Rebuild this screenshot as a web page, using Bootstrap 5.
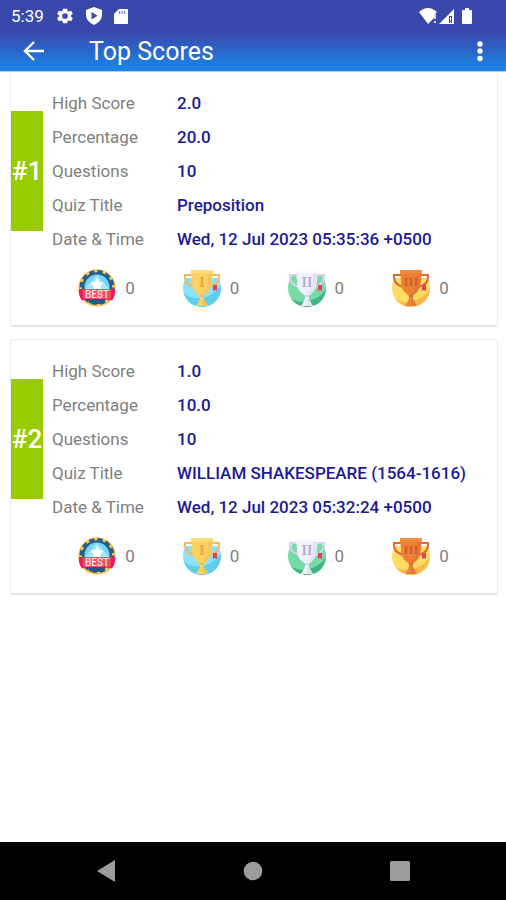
<!DOCTYPE html>
<html lang="en">
<head>
<meta charset="utf-8">
<meta name="viewport" content="width=device-width, initial-scale=1">
<title>Top Scores</title>
<link href="https://cdn.jsdelivr.net/npm/bootstrap@5.3.0/dist/css/bootstrap.min.css" rel="stylesheet">
<style>
body { font-family: Roboto, "Liberation Sans", sans-serif; background: #fff; }
svg { display: block; flex: none; }
.top-area { height: 72px; background: linear-gradient(#3949ab 32px, #1a86e8 70px); border-bottom: 1px solid #b3cdec; color: #fff; }
.status-line { height: 32px; padding: 0 33px 0 11px; gap: 12px; font-size: 17px; line-height: 32px; }
.app-bar { height: 39px; padding: 0 16px 0 22px; }
.app-bar h1 { font-size: 25px; line-height: 41px; margin: 0 0 0 43px; font-weight: 400; }
.plain-btn { border: 0; padding: 0; background: none; color: inherit; }
.score-list { padding: 0 8px 0 10px; gap: 12px; }
.score-card { border: 1px solid #ececec; border-bottom: 2px solid #e6e6e6; border-radius: 2px; }
.score-card:first-child { border-top: 0; }
.score-main { padding-top: 14px; }
.rank { width: 32px; height: 120px; background: #99cc00; color: #fff; font-size: 26px; font-weight: 500; }
.score-table { font-size: 17px; line-height: 34px; margin-left: 9px; }
.score-table th { font-weight: 400; color: #808080; width: 125px; padding: 0; }
.score-table td { font-weight: 500; color: #1a1a96; padding: 0; }
.medals { padding: 13px 0 18px 19px; }
.medal { gap: 9px; font-size: 17px; line-height: 39px; color: #808080; }
.medal svg { margin-bottom: 1px; }
.medals { padding-bottom: 17px; }
.system-nav { height: 58px; background: #000; color: #9c9c9c; padding: 0 33px; }
</style>
<script src="https://cdn.jsdelivr.net/npm/bootstrap@5.3.0/dist/js/bootstrap.bundle.min.js"></script>
</head>
<body class="d-flex flex-column min-vh-100">

<svg width="0" height="0" class="position-absolute" aria-hidden="true">
  <defs>
    <clipPath id="disc"><circle cx="19" cy="19" r="19"/></clipPath>
    <symbol id="best" viewBox="0 0 38 38">
      <circle cx="19" cy="19" r="18.800" fill="#fbc455"/>
      <circle cx="19" cy="18.500" r="15.500" fill="none" stroke="#245f8c" stroke-width="4" stroke-dasharray="5 3.115"/>
      <circle cx="19" cy="18.500" r="15.200" fill="#245f8c"/>
      <circle cx="19" cy="18" r="12.500" fill="#74d5f8"/>
      <path d="M7 20 19 6l12 14z" fill="#a9e6fb"/>
      <path d="m19 9 2 4.100 4.500.6-3.200 3.200.8 4.500-4.100-2.100-4.100 2.100.8-4.500-3.200-3.200 4.500-.6z" fill="#fff"/>
      <path d="M1 20h36q1 6-3 11.500L29 30H9l-5 1.500Q0 26 1 20z" fill="#ec1c58"/>
      <path d="M5 20h28v10H5z" fill="#f9485f"/>
      <path d="M11 30h16v4q-8 2-16 0z" fill="#245a85"/>
      <text x="19" y="28.500" text-anchor="middle" font-family="Roboto, sans-serif" font-size="10" font-weight="500" fill="#ffe4ea">BEST</text>
    </symbol>
    <symbol id="cup" viewBox="0 0 38 38">
      <path d="M9 6H2q-1 9 9 12M29 6h7q1 9-9 12" fill="none" stroke="var(--edge)" stroke-width="2"/>
      <path d="M8 2h22l-1 10q-1 10-6 13l-2 2v3l4 7H13l4-7v-3l-2-2Q9 22 9 12z" fill="var(--cup)"/>
      <path d="M25 5h4l-1 8q-1 9-5 11l-3 2v-2q5-4 5-12zM19 30h2l4 7h-5z" fill="var(--edge)" opacity=".5"/>
      <path d="M8 1h22v3H8z" fill="var(--rim)"/>
      <path d="M17 26h4v2h-4z" fill="var(--edge)"/>
      <path d="M30 16h4v6l-2-1-2 1z" fill="#e93b5b"/>
    </symbol>
    <symbol id="gear" viewBox="0 0 24 24"><path fill="currentColor" fill-rule="evenodd" d="M19.400 13a7.500 7.500 0 0 0 0-2l2.200-1.700-2.200-3.800-2.600 1.100A8 8 0 0 0 15 5.600L14.600 3h-5L9 5.600a8 8 0 0 0-1.700 1L4.600 5.500 2.400 9.300 4.600 11a7.500 7.500 0 0 0 0 2l-2.200 1.700 2.200 3.800 2.700-1.100a8 8 0 0 0 1.700 1l.6 2.600h5l.4-2.600a8 8 0 0 0 1.800-1l2.600 1.100 2.200-3.800zM12 15.500a3.500 3.500 0 1 1 0-7 3.500 3.500 0 0 1 0 7z"/></symbol>
    <symbol id="shield" viewBox="0 0 16 18"><path fill="currentColor" fill-rule="evenodd" d="m8 0 8 3v6q-1 6-8 9-7-3-8-9V3zM5.500 5v7.500l6-3.700z"/></symbol>
    <symbol id="sdcard" viewBox="0 0 14 17"><path fill="currentColor" d="M5 1h8q1 0 1 1v13q0 1-1 1H1q-1 0-1-1V6z"/><path d="M5.500 3v3M8 3v3M10.500 3v3" stroke="#7f89ca" stroke-width="1.300"/></symbol>
    <g id="gold" font-family="Liberation Serif, serif" font-size="14" font-weight="700" text-anchor="middle">
      <g clip-path="url(#disc)"><path d="M0 9h38v29H0z" fill="#8be2f8"/><path d="M0 24q19 14 38-7v21H0z" fill="#5fcdee"/></g>
      <use href="#cup" width="38" height="38" style="--cup:#fbd262;--edge:#f2b95a;--rim:#fddc7c"/><text x="19" y="18" fill="#e9a43e">I</text>
    </g>
    <g id="silver" font-family="Liberation Serif, serif" font-size="14" font-weight="700" text-anchor="middle">
      <g clip-path="url(#disc)"><path d="M0 6h38v32H0z" fill="#78dba6"/><path d="M0 27q9 8 19 5 13-2 19-12v18H0z" fill="#3fb584"/></g>
      <use href="#cup" width="38" height="38" style="--cup:#f1f0fc;--edge:#d3d2ec;--rim:#fafaff"/><text x="19" y="18" fill="#b0b0d4">II</text>
    </g>
    <g id="bronze" font-family="Liberation Serif, serif" font-size="13" font-weight="700" text-anchor="middle">
      <g clip-path="url(#disc)"><path d="M0 9h38v29H0z" fill="#fedb63"/><path d="M0 27q10 9 19 5 12-2 19-12v18H0z" fill="#f7b94a"/></g>
      <use href="#cup" width="38" height="38" style="--cup:#ed8236;--edge:#dd6a34;--rim:#f08c40"/><text x="19" y="17" fill="#cf5f2c">III</text>
    </g>
  </defs>
</svg>

<header class="top-area">
  <div class="status-line d-flex align-items-center">
    <span>5:39</span>
    <svg width="18" height="18" viewBox="1 1 22 22"><use href="#gear" width="24" height="24"/></svg>
    <svg width="16" height="18"><use href="#shield"/></svg>
    <svg width="14" height="17"><use href="#sdcard"/></svg>
    <svg class="ms-auto" width="54" height="18" viewBox="0 0 54 18" fill="currentColor" aria-hidden="true">
      <path d="M0 5Q9-3 18 5l-3 3v3l-6 6z"/><path d="M15 7h2v5h-2zM15 14h2v2h-2z" opacity=".75"/>
      <path fill-rule="evenodd" d="M20 17 35 2v15zM30 9v7h3V9z"/><path d="M31 10h1v4h-1zM31 15h1v1h-1z"/>
      <path d="M43 4q0-1 1-1h2V1h4v2h2q1 0 1 1v12q0 1-1 1h-8q-1 0-1-1z"/>
    </svg>
  </div>
  <div class="app-bar d-flex align-items-center">
    <button class="plain-btn" type="button" aria-label="Back">
      <svg width="24" height="22" viewBox="0 0 24 22" fill="none" stroke="currentColor" stroke-width="2.400"><path d="M22 10H4M12 1l-9 9 9 9"/></svg>
    </button>
    <h1>Top Scores</h1>
    <button class="plain-btn ms-auto" type="button" aria-label="More options">
      <svg width="20" height="22" viewBox="0 0 20 22" fill="currentColor"><circle cx="10" cy="3" r="2.700"/><circle cx="10" cy="10" r="2.700"/><circle cx="10" cy="17.500" r="2.700"/></svg>
    </button>
  </div>
</header>

<main class="score-list d-flex flex-column">
  <article class="score-card">
    <div class="score-main d-flex align-items-center">
      <div class="rank d-flex align-items-center justify-content-center">#1</div>
      <table class="score-table">
        <tbody>
          <tr><th scope="row">High Score</th><td>2.0</td></tr>
          <tr><th scope="row">Percentage</th><td>20.0</td></tr>
          <tr><th scope="row">Questions</th><td>10</td></tr>
          <tr><th scope="row">Quiz Title</th><td>Preposition</td></tr>
          <tr><th scope="row">Date &amp; Time</th><td>Wed, 12 Jul 2023 05:35:36 +0500</td></tr>
        </tbody>
      </table>
    </div>
    <div class="medals d-flex justify-content-evenly">
      <div class="medal d-flex"><svg width="38" height="38"><use href="#best"/></svg>0</div>
      <div class="medal d-flex"><svg width="38" height="38" viewBox="0 0 38 38"><use href="#gold"/></svg>0</div>
      <div class="medal d-flex"><svg width="38" height="38" viewBox="0 0 38 38"><use href="#silver"/></svg>0</div>
      <div class="medal d-flex"><svg width="38" height="38" viewBox="0 0 38 38"><use href="#bronze"/></svg>0</div>
    </div>
  </article>

  <article class="score-card">
    <div class="score-main d-flex align-items-center">
      <div class="rank d-flex align-items-center justify-content-center">#2</div>
      <table class="score-table">
        <tbody>
          <tr><th scope="row">High Score</th><td>1.0</td></tr>
          <tr><th scope="row">Percentage</th><td>10.0</td></tr>
          <tr><th scope="row">Questions</th><td>10</td></tr>
          <tr><th scope="row">Quiz Title</th><td>WILLIAM SHAKESPEARE (1564-1616)</td></tr>
          <tr><th scope="row">Date &amp; Time</th><td>Wed, 12 Jul 2023 05:32:24 +0500</td></tr>
        </tbody>
      </table>
    </div>
    <div class="medals d-flex justify-content-evenly">
      <div class="medal d-flex"><svg width="38" height="38"><use href="#best"/></svg>0</div>
      <div class="medal d-flex"><svg width="38" height="38" viewBox="0 0 38 38"><use href="#gold"/></svg>0</div>
      <div class="medal d-flex"><svg width="38" height="38" viewBox="0 0 38 38"><use href="#silver"/></svg>0</div>
      <div class="medal d-flex"><svg width="38" height="38" viewBox="0 0 38 38"><use href="#bronze"/></svg>0</div>
    </div>
  </article>
</main>

<nav class="system-nav mt-auto d-flex align-items-center justify-content-around" aria-label="System">
  <button class="plain-btn" type="button" aria-label="Back"><svg width="20" height="22" viewBox="0 0 20 22"><path d="M1 11 19 0v22z" fill="currentColor"/></svg></button>
  <button class="plain-btn" type="button" aria-label="Home"><svg width="20" height="20" viewBox="0 0 20 20"><circle cx="10" cy="10" r="9.300" fill="currentColor"/></svg></button>
  <button class="plain-btn" type="button" aria-label="Recent apps"><svg width="20" height="20" viewBox="0 0 20 20"><rect width="20" height="20" rx="1.500" fill="currentColor"/></svg></button>
</nav>
</body>
</html>
